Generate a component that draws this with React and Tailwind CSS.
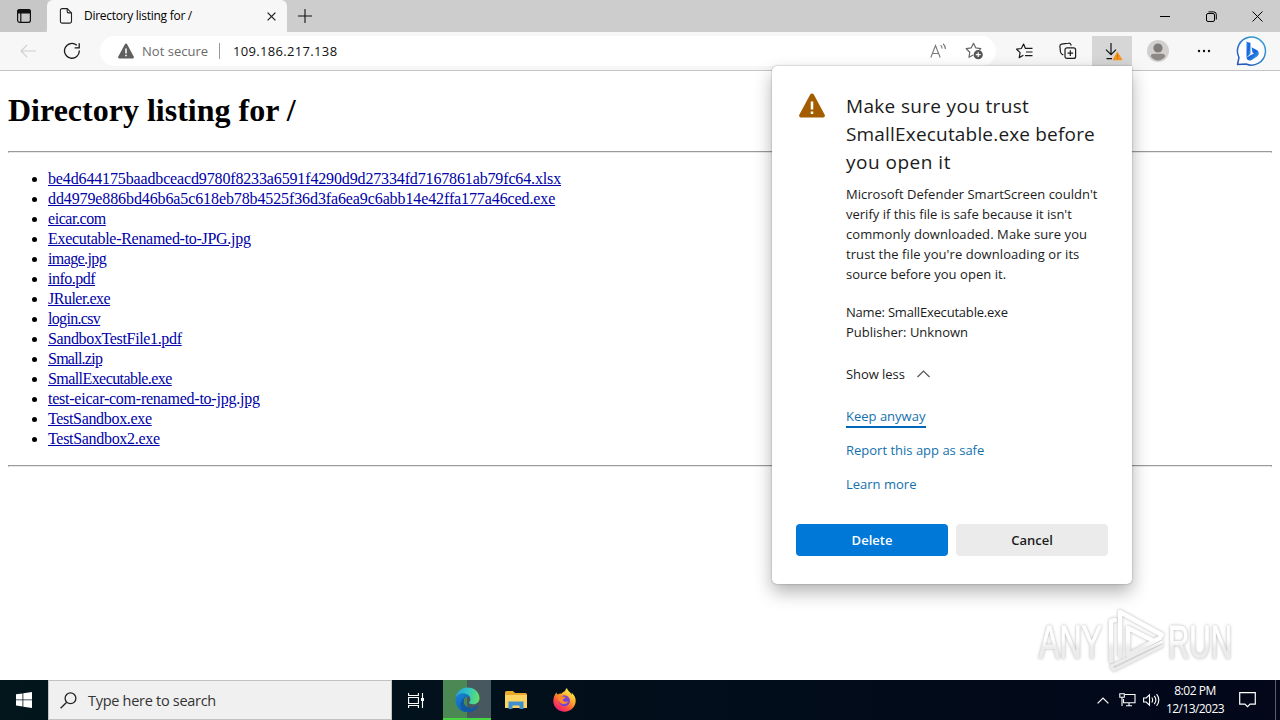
import clsx from 'clsx';

const files = [
  { name: 'be4d644175baadbceacd9780f8233a6591f4290d9d27334fd7167861ab79fc64.xlsx', tracking: 'tracking-[-0.145px]' },
  { name: 'dd4979e886bd46b6a5c618eb78b4525f36d3fa6ea9c6abb14e42ffa177a46ced.exe', tracking: 'tracking-[-0.11px]' },
  { name: 'eicar.com', tracking: 'tracking-[-0.44px]' },
  { name: 'Executable-Renamed-to-JPG.jpg', tracking: 'tracking-[-0.29px]' },
  { name: 'image.jpg', tracking: 'tracking-[-0.6px]' },
  { name: 'info.pdf', tracking: 'tracking-[-0.5px]' },
  { name: 'JRuler.exe', tracking: 'tracking-[-0.5px]' },
  { name: 'login.csv', tracking: 'tracking-[-0.67px]' },
  { name: 'SandboxTestFile1.pdf', tracking: 'tracking-[-0.35px]' },
  { name: 'Small.zip', tracking: 'tracking-[-0.75px]' },
  { name: 'SmallExecutable.exe', tracking: 'tracking-[-0.57px]' },
  { name: 'test-eicar-com-renamed-to-jpg.jpg', tracking: 'tracking-[-0.24px]' },
  { name: 'TestSandbox.exe', tracking: 'tracking-[-0.33px]' },
  { name: 'TestSandbox2.exe', tracking: 'tracking-[-0.31px]' },
];

export default function App() {
  return (
    <div className="relative flex h-[720px] w-[1280px] flex-col overflow-hidden bg-white font-['Open_Sans','Noto_Sans',sans-serif] text-black">
      <TabStrip />
      <Toolbar />
      <DirectoryPage />
      <Taskbar />
      <Watermark />
      <DownloadDialog />
    </div>
  );
}

function TabStrip() {
  return (
    <div className="flex h-8 shrink-0 bg-[#cdcdcd]">
      <div className="flex w-[47px] items-center justify-center rounded-br-md bg-[#c7c7c7]">
        <svg width="16" height="16" viewBox="0 0 16 16" fill="none" stroke="#111" strokeWidth="1.2">
          <rect x="1.6" y="1.6" width="12.8" height="12.8" rx="2.2" />
          <path d="M1.6 5V3.8a2.2 2.2 0 0 1 2.2-2.2h8.4a2.2 2.2 0 0 1 2.2 2.2V5z" fill="#111" />
          <path d="M4.8 5v9.4" />
        </svg>
      </div>
      <div className="flex w-[240px] items-center rounded-t-md bg-[#f7f7f7] pl-3">
        <svg width="14" height="18" viewBox="0 0 14 18" fill="none" stroke="#222" strokeWidth="1.1">
          <path d="M3 1.6h5.2l4.3 4.3v8.6a1.6 1.6 0 0 1-1.6 1.6H3a1.6 1.6 0 0 1-1.6-1.6V3.2A1.6 1.6 0 0 1 3 1.6z" />
          <path d="M8.2 1.6v3a1.3 1.3 0 0 0 1.3 1.3h3" />
        </svg>
        <span className="ml-[11px] w-[180px] whitespace-nowrap text-[12px] leading-4 tracking-[-0.28px]">Directory listing for /</span>
        <svg className="ml-[3px]" width="9" height="9" viewBox="0 0 9 9" stroke="#222" strokeWidth="1.3">
          <path d="M.6.6l7.8 7.8M8.4.6L.6 8.4" />
        </svg>
      </div>
      <div className="flex w-[35px] items-center justify-center">
        <svg width="14" height="14" viewBox="0 0 14 14" stroke="#111" strokeWidth="1.1">
          <path d="M7 0v14M0 7h14" />
        </svg>
      </div>
      <div className="ml-auto flex">
        <div className="flex w-[46px] items-center justify-center">
          <svg width="10" height="10" viewBox="0 0 10 10" stroke="#000"><path d="M0 5.5h10" /></svg>
        </div>
        <div className="flex w-[46px] items-center justify-center">
          <svg width="11" height="11" viewBox="0 0 11 11" fill="none" stroke="#000">
            <rect x=".5" y="2.5" width="8" height="8" rx="1.5" />
            <path d="M2.5.9h5.2a2.6 2.6 0 0 1 2.6 2.6v5" />
          </svg>
        </div>
        <div className="flex w-[46px] items-center justify-center">
          <svg width="11" height="11" viewBox="0 0 11 11" stroke="#000"><path d="M.5.5l10 10M10.5.5l-10 10" /></svg>
        </div>
      </div>
    </div>
  );
}

function Toolbar() {
  return (
    <div className="flex h-[39px] shrink-0 items-center border-b border-[#c4c4c4] bg-[#f7f7f7]">
      <svg className="ml-5" width="16" height="14" viewBox="0 0 16 14" fill="none" stroke="#cfcfcf" strokeWidth="1.2">
        <path d="M16 7H1M7.2.8L1 7l6.2 6.2" />
      </svg>
      <svg className="ml-[27px]" width="18" height="18" viewBox="0 0 18 18" fill="none" stroke="#1b1b1b" strokeWidth="1.3">
        <path d="M16.3 8.5A7.4 7.4 0 1 1 13.8 3.3M16.2 1.2v4.6h-4.6" />
      </svg>
      <div className="ml-[19px] flex h-[30px] w-[896px] items-center rounded-full bg-white pl-[18px]">
        <WarningIcon className="h-4 w-4 text-[#5f5f5f]" />
        <span className="ml-2 w-[67px] whitespace-nowrap pt-0.5 text-[13px] tracking-[0.02px] text-[#6b6b6b]">Not secure</span>
        <span className="ml-[10px] h-4 w-px bg-[#999]" />
        <span className="ml-[13px] whitespace-nowrap pt-0.5 text-[13px] tracking-[0.33px] text-[#111]">109.186.217.138</span>
        <svg className="ml-auto" width="17" height="16" viewBox="0 0 17 16" fill="none" stroke="#777" strokeWidth="1.1">
          <path d="M.8 14.5L5.5 2.5l4.700 12M2.400 10.500h6.200" />
          <path d="M10.500 2.200c1 .9 1.600 2 1.600 3.300M13 .8c1.600 1.300 2.400 3 2.400 5.200" />
        </svg>
        <svg className="ml-[18px] mr-3" width="19" height="18" viewBox="0 0 19 18" fill="none" stroke="#666" strokeWidth="1.2" strokeLinejoin="round">
          <path d="M8.2 13L4 15.300l.8-5.100L1.200 6.700l5-.8L8.500 1.300l2.300 4.600 5 .8-1.400 1.400" />
          <circle cx="13.2" cy="12.7" r="4.6" fill="#555" stroke="none" />
          <path d="M13.2 10.300v4.800M10.800 12.700h4.800" stroke="#fff" />
        </svg>
      </div>
      <svg className="ml-5" width="17" height="16" viewBox="0 0 17 16" fill="none" stroke="#1b1b1b" strokeWidth="1.2" strokeLinejoin="round">
        <path d="M9.300 5.300L7.600 1 5.300 5.500l-4.700.7 3.500 3.400-.9 5 4.200-2.300" />
        <path d="M9 5.300h7.500M10 9h6.500M9 12.700h7.500" />
      </svg>
      <svg className="ml-[26px] mr-px" width="18" height="18" viewBox="0 0 18 18" fill="none" stroke="#1b1b1b" strokeWidth="1.2">
        <rect x="6" y="5.8" width="10.6" height="10.6" rx="2" />
        <path d="M11.300 8.300v5.600M8.500 11.100h5.600M4.300 13L3 12.200C2 11.700 1.700 11 1.500 10L.9 4.300c-.1-1.200.4-2 1.600-2.200l7-.9c1.200-.2 2 .3 2.400 1.400l.3 1" />
      </svg>
      <div className="ml-[14px] flex h-[30px] w-10 items-center justify-center bg-[#d6d6d6]">
        <svg className="ml-0.5" width="19" height="19" viewBox="0 0 19 19" fill="none" stroke="#111" strokeWidth="1.2">
          <path d="M7 1v11.500M2 7.700l5 5 5-5M2.500 16.600H8" />
          <path d="M13.400 10.500l4.300 7.200H9.300z" fill="#f7941d" stroke="#f7941d" strokeLinejoin="round" />
          <path d="M13.400 12.500v2.500M13.400 16v1" stroke="#b5650b" strokeWidth="1" />
        </svg>
      </div>
      <svg className="ml-[15px]" width="22" height="22" viewBox="0 0 22 22">
        <circle cx="11" cy="11" r="11" fill="#d2d0ce" />
        <circle cx="11" cy="8" r="4.600" fill="#7f7c79" />
        <path d="M3.800 16.500c0-2 1.500-2.700 3.200-2.700h8c1.700 0 3.200.7 3.200 2.700A9.500 9.500 0 0 1 11 20.500a9.500 9.500 0 0 1-7.200-4z" fill="#8c8986" />
      </svg>
      <svg className="ml-7" width="14" height="4" viewBox="0 0 14 4" fill="#111">
        <circle cx="2" cy="2" r="1.2" /><circle cx="7" cy="2" r="1.2" /><circle cx="12" cy="2" r="1.2" />
      </svg>
      <BingIcon />
    </div>
  );
}

function WarningIcon({ className, mark = '#fff' }) {
  return (
    <svg className={className} viewBox="0 0 26 24" fill="currentColor">
      <path d="M11.200 1.100a2 2 0 0 1 3.600 0l10.900 20.100a1.900 1.900 0 0 1-1.700 2.800H2a1.900 1.900 0 0 1-1.700-2.800z" />
      <path d="M13 8v8M13 18v2.600" stroke={mark} strokeWidth="2.500" />
    </svg>
  );
}

function BingIcon() {
  return (
    <svg className="ml-[25px]" width="32" height="32" viewBox="0 0 32 32" fill="none">
      <defs>
        <linearGradient id="ring" x1="1" y1="0" x2="0" y2="1">
          <stop offset="0" stopColor="#35a9dc" />
          <stop offset="1" stopColor="#2350b8" />
        </linearGradient>
        <linearGradient id="bing" x1="0" y1="0" x2="1" y2="1">
          <stop offset="0" stopColor="#2c8cf0" />
          <stop offset=".5" stopColor="#1c62d8" />
          <stop offset="1" stopColor="#38bdf2" />
        </linearGradient>
      </defs>
      <path d="M1.500 29.500L3 22.500A14 14 0 1 1 10 29z" fill="#fff" stroke="url(#ring)" strokeWidth="1.500" strokeLinejoin="round" />
      <path d="M10.500 6.500l4 1.500v11l-4 3.500z" fill="url(#bing)" />
      <path d="M15.500 12.300l5.300 2.700c2.600 1.600 2.600 4.700.6 6.300l-5.600 3.600c-2.500 1.200-5 .3-5.300-2.400l4.500-2.600 3-1.500-1.500-.8z" fill="url(#bing)" />
    </svg>
  );
}

function DirectoryPage() {
  return (
    <main className="min-h-0 grow px-2 font-['Liberation_Serif',serif]">
      <h1 className="mt-[21px] h-[59px] whitespace-nowrap text-[32px] font-bold leading-[37px]">Directory listing for /</h1>
      <hr className="h-0.5 border border-[#9a9a9a] border-b-[#e8e8e8]" />
      <ul className="mt-4 list-disc pl-10 text-[16px] leading-5">
        {files.map((file) => (
          <li key={file.name} className="h-5 whitespace-nowrap">
            <a className={clsx('text-[#0000a8] underline', file.tracking)}>{file.name}</a>
          </li>
        ))}
      </ul>
      <hr className="mt-4 h-0.5 border border-[#9a9a9a] border-b-[#e8e8e8]" />
    </main>
  );
}

function DownloadDialog() {
  return (
    <div className="absolute left-[772px] top-[66px] flex h-[518px] w-[360px] flex-col rounded-b-[5px] rounded-tl-[5px] bg-white px-6 pt-[26px] text-[#1b1b1b] shadow-[0_0_2px_rgba(0,0,0,0.35),0_8px_18px_rgba(0,0,0,0.3)]">
      <div className="flex">
        <WarningIcon className="ml-[3px] mt-[1px] h-[25px] w-[26px] shrink-0 text-[#a35c00]" />
        <div className="ml-[21px] flex flex-col items-start whitespace-nowrap">
          <h2 className="text-[19px] leading-7">
            <span className="block tracking-[0.33px]">Make sure you trust</span>
            <span className="block tracking-[0.18px]">SmallExecutable.exe before</span>
            <span className="block tracking-[0.5px]">you open it</span>
          </h2>
          <p className="mt-2 text-[13px] leading-5">
            <span className="block tracking-[0.02px]">Microsoft Defender SmartScreen couldn't</span>
            <span className="block">verify if this file is safe because it isn't</span>
            <span className="block tracking-[0.09px]">commonly downloaded. Make sure you</span>
            <span className="block tracking-[0.07px]">trust the file you're downloading or its</span>
            <span className="block tracking-[0.04px]">source before you open it.</span>
          </p>
          <p className="mt-[18px] text-[13px] leading-5">
            <span className="block tracking-[-0.2px]">Name: SmallExecutable.exe</span>
            <span className="block">Publisher: Unknown</span>
          </p>
          <div className="mt-[22px] flex items-center text-[13px] leading-5">
            <span className="w-[59px] tracking-[-0.05px]">Show less</span>
            <svg className="ml-3" width="13" height="8" viewBox="0 0 13 8" fill="none" stroke="#555" strokeWidth="1.2">
              <path d="M.5 7l6-6 6 6" />
            </svg>
          </div>
          <DialogLink className="mt-[22px] w-20 border-b-2 border-[#0067b8]">Keep anyway</DialogLink>
          <DialogLink className="mt-3">Report this app as safe</DialogLink>
          <DialogLink className="mt-[14px]">Learn more</DialogLink>
        </div>
      </div>
      <div className="mt-[30px] flex gap-2 text-[13px] font-semibold">
        <button className="h-8 w-[152px] rounded-sm bg-[#0078d7] pt-0.5 text-white">Delete</button>
        <button className="h-8 w-[152px] rounded-sm bg-[#ebebeb] pt-0.5">Cancel</button>
      </div>
    </div>
  );
}

function DialogLink({ className, children }) {
  return <a className={clsx('block text-[13px] leading-5 text-[#1471ad]', className)}>{children}</a>;
}

function Watermark() {
  return (
    <svg className="absolute left-[1030px] top-[604px] overflow-visible drop-shadow-[0_0_1.5px_rgba(0,0,0,0.3)]" width="220" height="74" viewBox="0 0 220 74" fill="url(#mark)">
      <defs>
        <linearGradient id="mark" gradientUnits="userSpaceOnUse" x1="0" y1="20" x2="0" y2="60">
          <stop offset=".4" stopColor="#fff" />
          <stop offset=".6" stopColor="#ececec" />
        </linearGradient>
      </defs>
      <text x="9" y="54" fontFamily="Liberation Sans" fontSize="47" textLength="63" lengthAdjust="spacingAndGlyphs" stroke="url(#mark)" strokeWidth="1">ANY</text>
      <text x="138" y="54" fontFamily="Liberation Sans" fontSize="47" textLength="64" lengthAdjust="spacingAndGlyphs" stroke="url(#mark)" strokeWidth="1">RUN</text>
      <g fill="none" stroke="url(#mark)" strokeWidth="4.500" strokeLinejoin="round" strokeLinecap="round">
        <path d="M90 51V8l42 23" />
        <path d="M81 57V17l4-1" />
        <path d="M98 24v27l32-17" />
        <path d="M98 24l24 12" />
        <path d="M81 62l51-24M81 62l3 4 48-24" strokeWidth="3" />
      </g>
    </svg>
  );
}

function Taskbar() {
  return (
    <footer className="flex h-10 shrink-0 bg-linear-to-r from-[#02161c] to-[#020719] text-white">
      <div className="flex w-12 items-center justify-center">
        <svg width="16" height="16" viewBox="0 0 16 16" fill="#fff">
          <path d="M0 2.300l6.500-.9v6.100H0zM7.300 1.300L16 0v7.500H7.300zM0 8.300h6.500v6.200L0 13.600zM7.300 8.300H16V16l-8.700-1.300z" />
        </svg>
      </div>
      <div className="flex w-[344px] items-center border border-[#c2c2c2] bg-[#f0f0f0] text-[#222]">
        <svg className="ml-[11px]" width="17" height="17" viewBox="0 0 17 17" fill="none" stroke="#222" strokeWidth="1.3">
          <circle cx="10.500" cy="6.300" r="5.400" />
          <path d="M6.700 10.200L.6 16.300" />
        </svg>
        <span className="ml-[11px] whitespace-nowrap pt-0.5 text-[14.5px] tracking-[-0.29px] text-[#333]">Type here to search</span>
      </div>
      <div className="flex w-[51px] items-center pl-4">
        <svg width="17" height="17" viewBox="0 0 17 17" fill="none" stroke="#fff" strokeWidth="1.1">
          <path d="M.6 1v2.500h9.800V1M.6 16v-2.500h9.800V16M.6 5.500h9.800v6H.6zM14.500 1v15" />
          <path d="M13 6h3v3h-3z" fill="#fff" stroke="none" />
        </svg>
      </div>
      <div className="flex w-12 items-center justify-center border-b-2 border-[#45d640] bg-linear-to-r from-[#4b8853] from-50% to-[#48585f] to-50%">
        <EdgeIcon />
      </div>
      <div className="flex w-[49px] items-center justify-center">
        <svg width="22" height="20" viewBox="0 0 22 20">
          <path d="M0 2.500A1.500 1.500 0 0 1 1.500 1H8l2 2h10.500A1.500 1.500 0 0 1 22 4.500V17H0z" fill="#e8a92c" />
          <path d="M0 5h22v13H0z" fill="#fcd462" />
          <path d="M3.500 11.500h15V19h-4v-3.500h-7V19h-4z" fill="#3f8fd0" />
        </svg>
      </div>
      <div className="flex w-[49px] items-center justify-center">
        <FirefoxIcon />
      </div>
      <div className="ml-auto flex items-center">
        <svg width="12" height="7" viewBox="0 0 12 7" fill="none" stroke="#fff" strokeWidth="1.2"><path d="M.6 6.400L6 1l5.400 5.400" /></svg>
        <svg className="ml-[10px]" width="17" height="14" viewBox="0 0 17 14" fill="none" stroke="#fff" strokeWidth="1.1">
          <path d="M6 1.500h10v8.300H4.500V6M7 12.700h6M10 9.800v2.900" />
          <path d="M.8.700h4.500v3.500H.8zM3 4.200V13" />
        </svg>
        <svg className="ml-[7px]" width="17" height="14" viewBox="0 0 17 14" fill="none" stroke="#fff" strokeWidth="1.1">
          <path d="M.6 5v4h2.600l3.300 3.200V1.800L3.200 5zM8.800 4.500c1 1.500 1 3.500 0 5M11.200 2.800c2 2.500 2 5.900 0 8.400M13.600 1.200c2.700 3.500 2.700 8.100 0 11.600" />
        </svg>
        <div className="ml-[5px] flex w-[60px] flex-col items-center whitespace-nowrap text-[12px] leading-[18px]">
          <span className="tracking-[-0.45px]">8:02 PM</span>
          <span className="tracking-[-0.58px]">12/13/2023</span>
        </div>
        <svg className="ml-[14px]" width="17" height="16" viewBox="0 0 17 16" fill="none" stroke="#fff" strokeWidth="1.2">
          <path d="M.7.700h15.600v11.400h-5.200L8.500 14.600l-2.600-2.500H.7z" />
        </svg>
        <span className="ml-[19px] mr-1 h-10 w-px bg-[#5a5f6a]" />
      </div>
    </footer>
  );
}

function EdgeIcon() {
  return (
    <svg width="25" height="25" viewBox="0 0 25 25">
      <defs>
        <linearGradient id="edge-top" x1="0" y1=".4" x2="1" y2=".5">
          <stop offset="0" stopColor="#249fdc" />
          <stop offset=".5" stopColor="#30c4c4" />
          <stop offset="1" stopColor="#65e263" />
        </linearGradient>
        <linearGradient id="edge-low" x1="0" y1="0" x2="1" y2="1">
          <stop offset="0" stopColor="#1686d9" />
          <stop offset="1" stopColor="#0b4f9e" />
        </linearGradient>
      </defs>
      <path d="M.6 11C1.300 5 6.200.5 12.500.5 19.500.5 24.500 5.500 24.500 11c0 4-3 6.300-6.600 6.300-2.500 0-4.200-.9-3.800-2 .8-.8 1.300-1.700 1.300-3C15.400 9 12 6.600 8.200 6.600c-3.500 0-6 1.800-7.600 4.400z" fill="url(#edge-top)" />
      <path d="M.5 12.500C.8 9 4 6.600 8.200 6.600c3 0 5.500 1.400 6.600 3.500-3-1.200-6.200.8-6.200 4.400 0 4.200 4 7 8.400 6.400 2.200-.3 4-1.300 5.400-2.300.5-.3.900.1.600.6A12 12 0 0 1 .5 12.500z" fill="url(#edge-low)" />
      <path d="M8.300 23.700C3.500 19.500 5 12 12 9.400c-2.300 1-3.400 2.800-3.400 5.100 0 4.200 4 7 8.400 6.400 2.200-.3 4-1.300 5.400-2.300.5-.3.900.1.600.6-3 4.800-9 6.500-14.700 4.500z" fill="#12599f" />
    </svg>
  );
}

function FirefoxIcon() {
  return (
    <svg width="23" height="24" viewBox="0 0 23 24">
      <defs>
        <linearGradient id="fox" x1=".8" y1=".1" x2=".2" y2="1">
          <stop offset="0" stopColor="#fff04a" />
          <stop offset=".4" stopColor="#ff9a24" />
          <stop offset=".7" stopColor="#ff4548" />
          <stop offset="1" stopColor="#e5187f" />
        </linearGradient>
      </defs>
      <path d="M3.500 4.500c.2 1 .7 1.600 1.200 2C6 5.500 7.500 5.200 8.800 5.500 9.500 4.200 11 3.400 12 3c.3-1.300 1-2.300 2-3 .5 3 3.700 4 4.700 7 .2-.8 0-1.700-.3-2.500C21 6.500 22.800 9.500 22.700 13c-.2 6-5 10.700-11.200 10.700S.3 19 .3 13c0-3.500 1.300-6.300 3.200-8.500z" fill="url(#fox)" />
      <circle cx="11.500" cy="12.800" r="5.500" fill="#7645d9" />
      <path d="M4.700 8.500c2-1.500 3.500-1 4.800 0 1.500.2 3 .3 3 1.100-.2 1-2.200 1.100-2.600 2.200 0 2 3.200 2.800 5.500 1.200-1 3.500-6.400 4.200-8.600 1-1.200-1.700-1.800-3.500-2.100-5.500z" fill="#ff8a27" />
    </svg>
  );
}
